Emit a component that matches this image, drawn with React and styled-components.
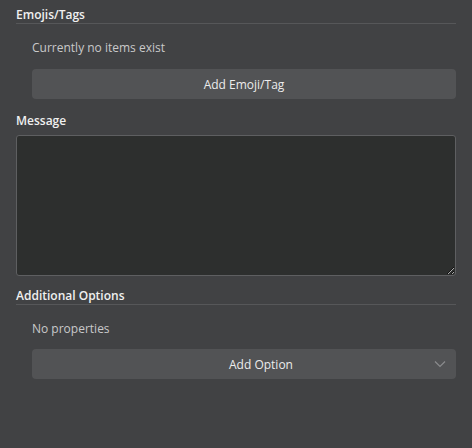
import React from 'react'
import styled, { createGlobalStyle } from 'styled-components'

const GlobalStyle = createGlobalStyle`
  html, body {
    margin: 0;
    padding: 0;
    background: #414244;
  }
  * {
    box-sizing: border-box;
  }
`

const Panel = styled.div`
  width: 472px;
  height: 448px;
  background: #414244;
  padding: 7px 16px 0 16px;
  font-family: 'Open Sans', 'Liberation Sans', sans-serif;
  font-size: 12px;
  display: flex;
  flex-direction: column;
`

const Heading = styled.div`
  font-weight: 600;
  color: #f0f0f0;
  line-height: 16px;
  padding-bottom: ${(p) => (p.$divider ? '0' : '6px')};
  border-bottom: ${(p) => (p.$divider ? '1px solid #565759' : 'none')};
  margin-top: ${(p) => p.$top || 0}px;
`

const Body = styled.div`
  padding: 16px 0 0 16px;
  display: flex;
  flex-direction: column;
  gap: ${(p) => p.$gap || 13}px;
`

const Empty = styled.div`
  color: #c9c9ca;
  line-height: 16px;
`

const Button = styled.button`
  position: relative;
  height: 30px;
  width: 100%;
  border: none;
  border-radius: 4px;
  background: #525355;
  color: #ececec;
  font-family: inherit;
  font-size: 12px;
  display: flex;
  align-items: center;
  justify-content: center;
  cursor: pointer;
  padding: 0 0 0 ${(p) => p.$indent || 0}px;
`

const Chevron = styled.svg`
  position: absolute;
  right: 10px;
  top: 11px;
`

const MessageBox = styled.textarea`
  display: block;
  width: 100%;
  height: 141px;
  background: #2d2f2e;
  border: 1px solid #5e5f61;
  border-radius: 3px;
  color: #e8e8e8;
  font-family: inherit;
  font-size: 12px;
  resize: vertical;
  outline: none;
  margin: 0;
`

export default function App () {
  return (
    <Panel>
      <GlobalStyle />
      <Heading $divider>Emojis/Tags</Heading>
      <Body>
        <Empty>Currently no items exist</Empty>
        <Button>Add Emoji/Tag</Button>
      </Body>
      <Heading $top={14}>Message</Heading>
      <MessageBox />
      <Heading $divider $top={12}>Additional Options</Heading>
      <Body $gap={12}>
        <Empty>No properties</Empty>
        <Button $indent={34}>
          Add Option
          <Chevron width='12' height='8' viewBox='0 0 12 8'>
            <path d='M1 1.5 L6 6.5 L11 1.5' fill='none' stroke='#8a8b8d' strokeWidth='1.2' />
          </Chevron>
        </Button>
      </Body>
    </Panel>
  )
}
